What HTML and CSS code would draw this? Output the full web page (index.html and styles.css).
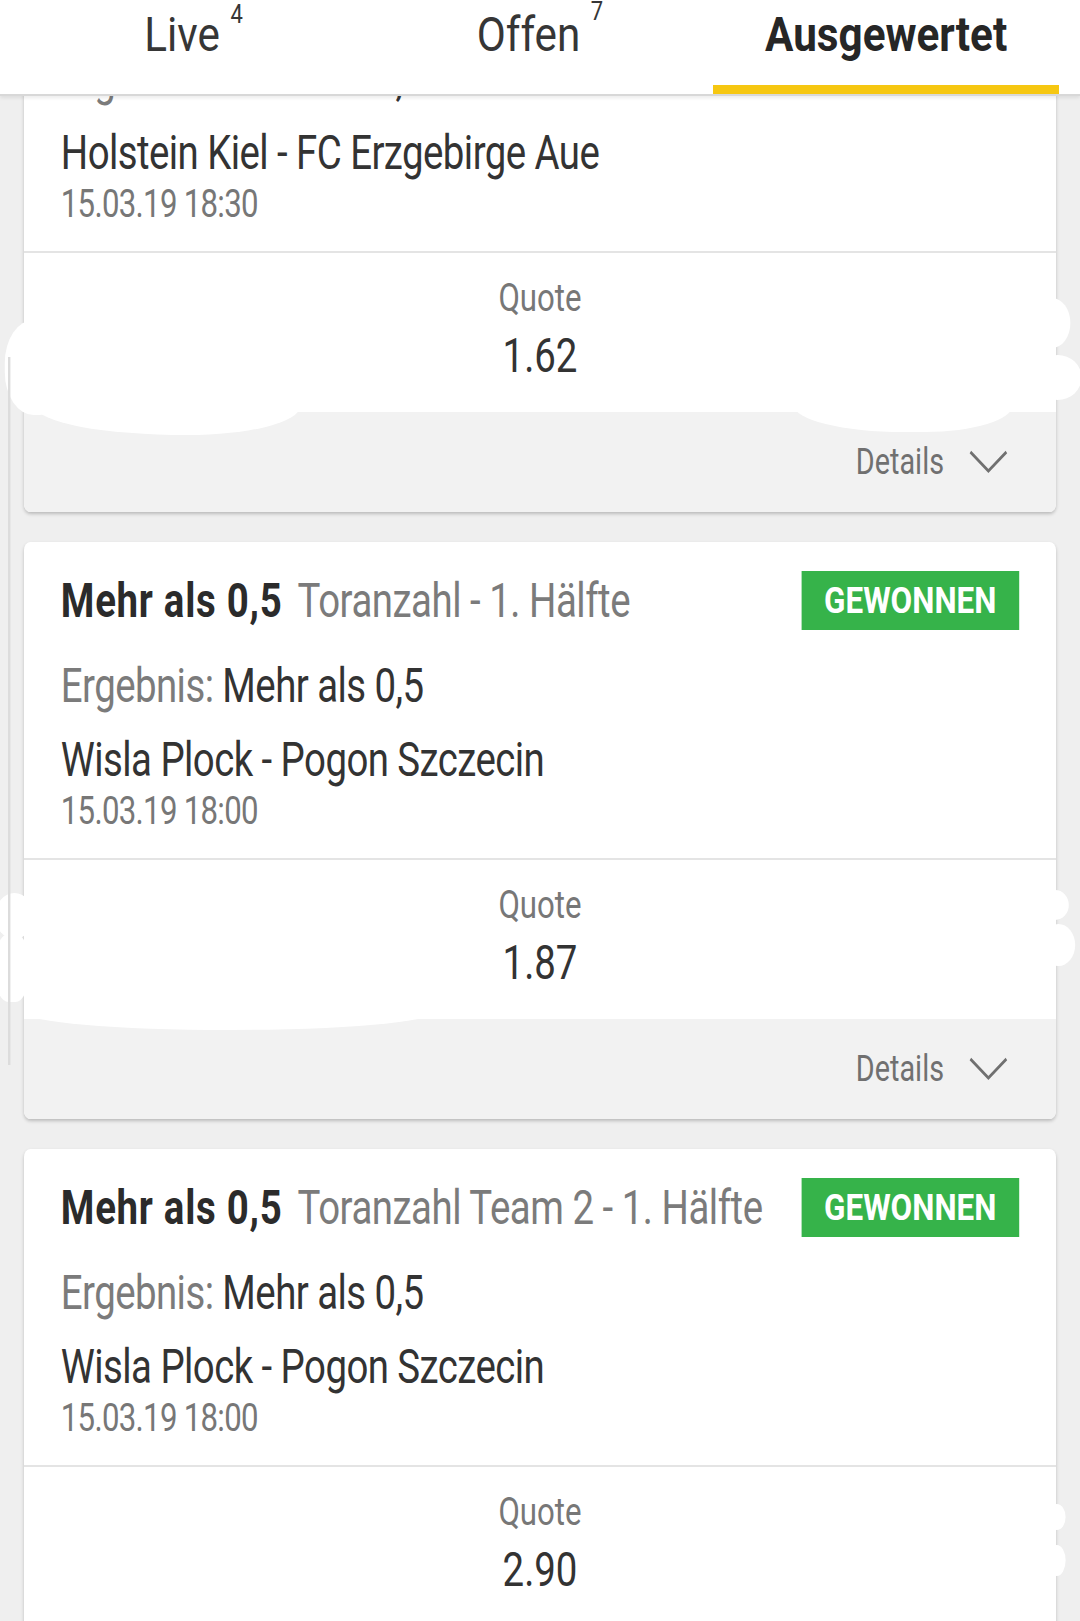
FILE: index.html
```html
<!DOCTYPE html>
<html lang="de">
<head>
    <meta charset="UTF-8">
    <meta name="viewport" content="width=device-width, initial-scale=1.0">
    <title>Meine Wetten - Ausgewertet</title>
<link rel="stylesheet" href="styles.css">
</head>
<body>
<div class="screen">
    <nav class="tabs">
        <div class="tab"><span class="tab-label">Live<sup class="count">4</sup></span></div>
        <div class="tab"><span class="tab-label">Offen<sup class="count count-up">7</sup></span></div>
        <div class="tab active"><span class="tab-label">Ausgewertet</span></div>
    </nav>

    <div class="list">
        <div class="cards">

            <!-- card scrolled half under the tab bar -->
            <div class="card">
                <div class="card-body">
                    <div class="bet-head">
                        <div class="bet-title"><span class="pick">Mehr als 1,5</span><span class="market">Toranzahl</span></div>
                        <span class="badge"><span class="badge-text">GEWONNEN</span></span>
                    </div>
                    <p class="result"><span class="label">Ergebnis:</span> Mehr als 1,5</p>
                    <p class="match">Holstein Kiel - FC Erzgebirge Aue</p>
                    <p class="date">15.03.19 18:30</p>
                </div>
                <div class="odds">
                    <div class="odds-label">Quote</div>
                    <div class="odds-value">1.62</div>
                </div>
                <div class="card-foot">
                    <span>Details</span>
                    <svg class="chevron" viewBox="0 0 49 24"><polyline points="2,2 24.5,21 47,2"/></svg>
                </div>
                <span class="blob c1-left"></span>
                <span class="blob c1-foot-a"></span>
                <span class="blob c1-foot-b"></span>
                <span class="blob c1-right-a"></span>
                <span class="blob c1-right-b"></span>
            </div>

            <div class="card">
                <div class="card-body">
                    <div class="bet-head">
                        <div class="bet-title"><span class="pick">Mehr als 0,5</span><span class="market">Toranzahl - 1. Hälfte</span></div>
                        <span class="badge"><span class="badge-text">GEWONNEN</span></span>
                    </div>
                    <p class="result"><span class="label">Ergebnis:</span> Mehr als 0,5</p>
                    <p class="match">Wisla Plock - Pogon Szczecin</p>
                    <p class="date">15.03.19 18:00</p>
                </div>
                <div class="odds">
                    <div class="odds-label">Quote</div>
                    <div class="odds-value">1.87</div>
                </div>
                <div class="card-foot">
                    <span>Details</span>
                    <svg class="chevron" viewBox="0 0 49 24"><polyline points="2,2 24.5,21 47,2"/></svg>
                </div>
                <span class="blob c2-left-a"></span>
                <span class="blob c2-left-b"></span>
                <span class="blob c2-right-a"></span>
                <span class="blob c2-right-b"></span>
                <span class="blob c2-foot"></span>
            </div>

            <div class="card">
                <div class="card-body">
                    <div class="bet-head">
                        <div class="bet-title"><span class="pick">Mehr als 0,5</span><span class="market">Toranzahl Team 2 - 1. Hälfte</span></div>
                        <span class="badge"><span class="badge-text">GEWONNEN</span></span>
                    </div>
                    <p class="result"><span class="label">Ergebnis:</span> Mehr als 0,5</p>
                    <p class="match">Wisla Plock - Pogon Szczecin</p>
                    <p class="date">15.03.19 18:00</p>
                </div>
                <div class="odds">
                    <div class="odds-label">Quote</div>
                    <div class="odds-value">2.90</div>
                </div>
                <div class="card-foot">
                    <span>Details</span>
                    <svg class="chevron" viewBox="0 0 49 24"><polyline points="2,2 24.5,21 47,2"/></svg>
                </div>
                <span class="blob c3-right-a"></span>
                <span class="blob c3-right-b"></span>
            </div>

        </div>
    </div>

    <div class="scroll-line"></div>
</div>
</body>
</html>
```

FILE: styles.css
```css
* {
    box-sizing: border-box;
}

html, body {
    margin: 0;
    padding: 0;
    overflow: hidden;
}

body {
    background-color: #efefef;
    font-family: Roboto, "Noto Sans", sans-serif;
    color: #333;
}

/* the app font is drawn narrow, so the whole screen is laid out wide and squeezed */
.screen {
    position: relative;
    width: 1350px;
    height: 1621px;
    transform: scaleX(0.8);
    transform-origin: 0 0;
}

/* tab bar */
.tabs {
    position: relative;
    z-index: 1;
    display: flex;
    height: 96px;
    padding: 0 26px;
    background-color: #fff;
    border-bottom: 2px solid #d8d8d8;
    box-shadow: 0 2px 4px rgba(0, 0, 0, 0.08);
}

.tab {
    flex: 1;
    padding-top: 7px;
    text-align: center;
    font-size: 48px;
    line-height: 56px;
    color: #363636;
}

/* tab labels are drawn a little wider than the list text */
.tab-label {
    display: inline-block;
    transform: scaleX(1.1);
}

.tab.active {
    font-weight: 700;
    color: #262626;
    box-shadow: inset 0 -9px 0 #f6c711;
}

.count {
    margin-left: 12px;
    font-size: 25px;
    line-height: 0;
    vertical-align: 28px;
}

.count-up {
    vertical-align: 31px;
}

/* bet list */
.list {
    height: 1525px;
    overflow: hidden;
}

.cards {
    display: flex;
    flex-direction: column;
    gap: 30px;
    margin-top: -161px;
    padding: 0 30px;
}

.card {
    position: relative;
    background-color: #fff;
    border-radius: 8px;
    box-shadow: 0 2px 4px rgba(0, 0, 0, 0.22);
}

.card-body {
    padding: 29px 46px 24px;
    border-bottom: 2px solid #e4e4e4;
}

.bet-head {
    display: flex;
    align-items: center;
    justify-content: space-between;
    height: 59px;
}

.bet-title {
    font-size: 48px;
    line-height: 56px;
    white-space: nowrap;
}

.pick {
    font-weight: 700;
    letter-spacing: 0.9px;
    color: #2b2b2b;
}

.market {
    margin-left: 19px;
    letter-spacing: -0.6px;
    color: #7b7b7b;
}

.badge {
    display: flex;
    align-items: center;
    justify-content: center;
    width: 272px;
    height: 59px;
    background-color: #36b34a;
    color: #fff;
    font-size: 36px;
    font-weight: 700;
}

.badge-text {
    display: inline-block;
    transform: scaleX(1.09);
}

.result, .match {
    margin: 28px 0 0;
    font-size: 48px;
    line-height: 56px;
    letter-spacing: -0.7px;
    color: #333;
}

.match {
    margin-top: 18px;
}

.label {
    color: #7b7b7b;
}

.date {
    margin: 0;
    font-size: 39px;
    line-height: 46px;
    letter-spacing: -0.9px;
    color: #777;
}

.odds {
    padding: 22px 0 28px;
    text-align: center;
}

.odds-label {
    font-size: 39px;
    line-height: 46px;
    color: #777;
}

.odds-value {
    margin-top: 7px;
    font-size: 48px;
    line-height: 56px;
    color: #333;
}

.card-foot {
    display: flex;
    align-items: center;
    justify-content: flex-end;
    gap: 31px;
    height: 100px;
    padding-right: 60px;
    background-color: #f2f2f2;
    border-radius: 0 0 8px 8px;
    font-size: 36px;
    color: #707070;
}

.chevron {
    width: 49px;
    height: 24px;
    fill: none;
    stroke: #707070;
    stroke-width: 3;
}

/* white marker strokes painted over the screenshot */
.blob {
    position: absolute;
    background-color: #fff;
    border-radius: 50%;
}

.c1-left { left: -24px; top: 385px; width: 80px; height: 95px; border-radius: 45%; }
.c1-foot-a { left: 15px; top: 470px; width: 330px; height: 30px; border-radius: 0 0 45% 60% / 0 0 100% 100%; }
.c1-foot-b { left: 962px; top: 470px; width: 274px; height: 27px; border-radius: 0 0 40% 50% / 0 0 100% 100%; }
.c1-right-a { left: 1262px; top: 363px; width: 46px; height: 50px; }
.c1-right-b { left: 1262px; top: 420px; width: 60px; height: 45px; }

.c2-left-a { left: -36px; top: 351px; width: 48px; height: 46px; }
.c2-left-b { left: -36px; top: 392px; width: 42px; height: 68px; border-radius: 40%; }
.c2-right-a { left: 1272px; top: 348px; width: 34px; height: 30px; }
.c2-right-b { left: 1272px; top: 382px; width: 42px; height: 42px; }
.c2-foot { left: 0; top: 470px; width: 512px; height: 18px; border-radius: 0 0 50% 50% / 0 0 100% 100%; }

.c3-right-a { left: 1280px; top: 355px; width: 22px; height: 26px; }
.c3-right-b { left: 1280px; top: 396px; width: 22px; height: 31px; }

.scroll-line {
    position: absolute;
    left: 10px;
    top: 357px;
    width: 3px;
    height: 708px;
    background-color: #dcdcdc;
}
```
